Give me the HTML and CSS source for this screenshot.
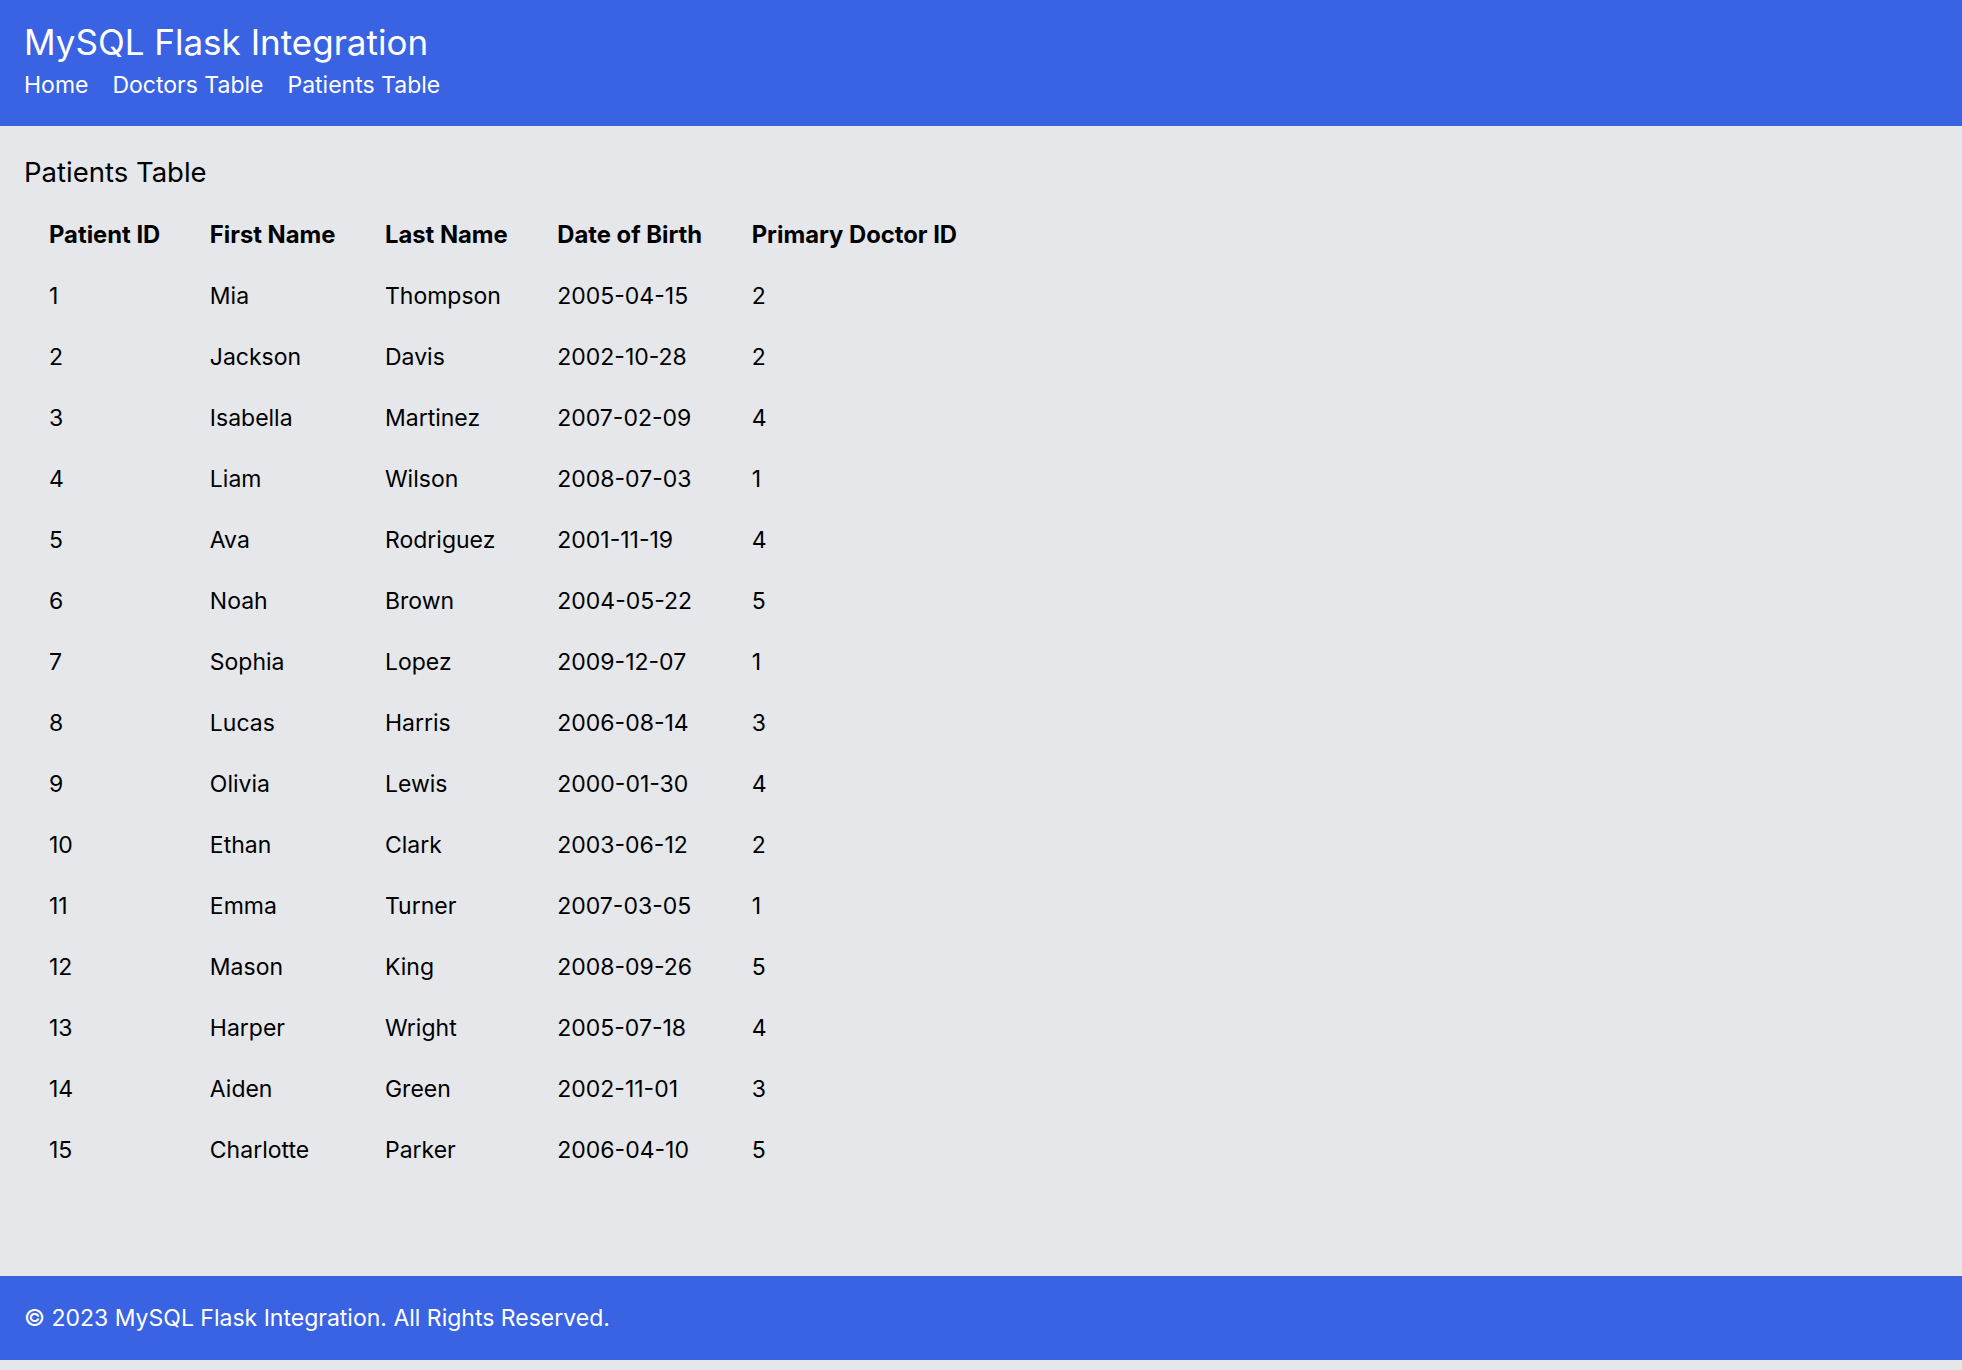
FILE: index.html
```html
<!DOCTYPE html>
<html lang="en">
<head>
<meta charset="utf-8">
<title>Patients Table</title>
<link rel="stylesheet" href="styles.css">
</head>
<body>
<header class="site-header">
  <h1 class="site-title">MySQL Flask Integration</h1>
  <nav class="site-nav">
    <a href="#" class="nav-link">Home</a>
    <a href="#" class="nav-link">Doctors Table</a>
    <a href="#" class="nav-link">Patients Table</a>
  </nav>
</header>
<main class="content">
  <h2 class="page-title">Patients Table</h2>
  <table class="data-table">
    <thead>
      <tr><th>Patient ID</th><th>First Name</th><th>Last Name</th><th>Date of Birth</th><th>Primary Doctor ID</th></tr>
    </thead>
    <tbody>
      <tr><td>1</td><td>Mia</td><td>Thompson</td><td>2005-04-15</td><td>2</td></tr>
      <tr><td>2</td><td>Jackson</td><td>Davis</td><td>2002-10-28</td><td>2</td></tr>
      <tr><td>3</td><td>Isabella</td><td>Martinez</td><td>2007-02-09</td><td>4</td></tr>
      <tr><td>4</td><td>Liam</td><td>Wilson</td><td>2008-07-03</td><td>1</td></tr>
      <tr><td>5</td><td>Ava</td><td>Rodriguez</td><td>2001-11-19</td><td>4</td></tr>
      <tr><td>6</td><td>Noah</td><td>Brown</td><td>2004-05-22</td><td>5</td></tr>
      <tr><td>7</td><td>Sophia</td><td>Lopez</td><td>2009-12-07</td><td>1</td></tr>
      <tr><td>8</td><td>Lucas</td><td>Harris</td><td>2006-08-14</td><td>3</td></tr>
      <tr><td>9</td><td>Olivia</td><td>Lewis</td><td>2000-01-30</td><td>4</td></tr>
      <tr><td>10</td><td>Ethan</td><td>Clark</td><td>2003-06-12</td><td>2</td></tr>
      <tr><td>11</td><td>Emma</td><td>Turner</td><td>2007-03-05</td><td>1</td></tr>
      <tr><td>12</td><td>Mason</td><td>King</td><td>2008-09-26</td><td>5</td></tr>
      <tr><td>13</td><td>Harper</td><td>Wright</td><td>2005-07-18</td><td>4</td></tr>
      <tr><td>14</td><td>Aiden</td><td>Green</td><td>2002-11-01</td><td>3</td></tr>
      <tr><td>15</td><td>Charlotte</td><td>Parker</td><td>2006-04-10</td><td>5</td></tr>
    </tbody>
  </table>
</main>
<footer class="site-footer">
  <p class="footer-text">© 2023 MySQL Flask Integration. All Rights Reserved.</p>
</footer>
</body>
</html>
```
FILE: styles.css
```css
html, body {
  margin: 0;
  padding: 0;
}
body {
  background: #e5e7eb;
  font-family: Inter, "Noto Sans", sans-serif;
  color: #000;
  min-height: 1370px;
}
.site-header {
  background: #3a63e4;
  color: #fff;
  padding: 20px 24px 0;
  height: 126px;
  box-sizing: border-box;
}
.site-title {
  margin: 0;
  font-size: 35px;
  font-weight: 400;
  line-height: 45px;
}
.site-nav {
  display: flex;
  gap: 24px;
  margin-top: 4px;
}
.nav-link {
  color: #fff;
  text-decoration: none;
  font-size: 23px;
  line-height: 32px;
}
.content {
  padding: 26px 24px 96px;
}
.page-title {
  margin: 0 0 12px;
  font-size: 27.5px;
  font-weight: 400;
  line-height: 40px;
}
.data-table {
  border-collapse: collapse;
}
.data-table th,
.data-table td {
  text-align: left;
  padding: 15.5px 24.5px 15.5px 25px;
  font-size: 23px;
  line-height: 30px;
}
.data-table th {
  font-size: 23.8px;
  font-weight: 700;
}
.site-footer {
  background: #3a63e4;
  color: #fff;
  height: 84px;
  display: flex;
  align-items: center;
  padding: 0 24px;
}
.footer-text {
  margin: 0;
  font-size: 23px;
}
```
